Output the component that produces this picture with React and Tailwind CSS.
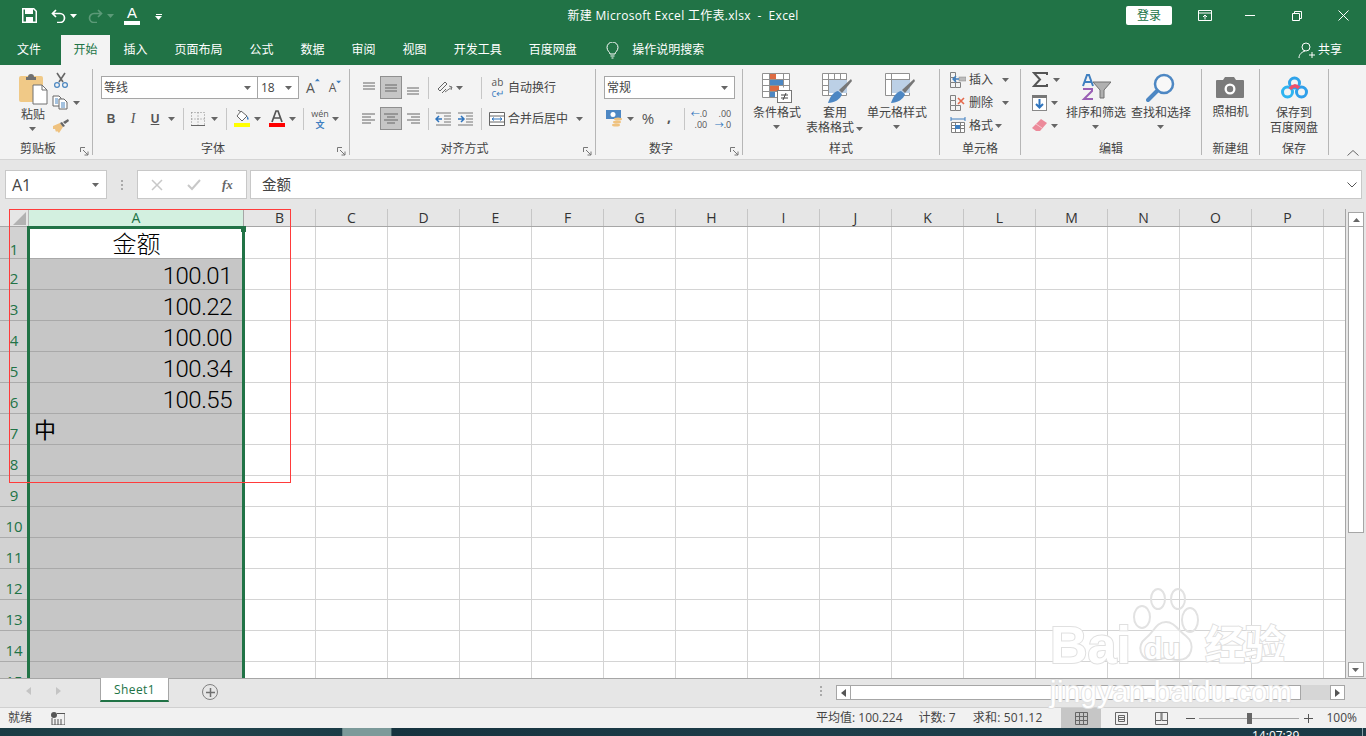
import React from "react";

const FONT = '"Open Sans","Noto Sans CJK SC",sans-serif';

const Caret = ({ c = "#666", className = "" }) => (
  <svg width="8" height="4" viewBox="0 0 8 4" className={className}><path d="M0 0h7L3.5 4z" fill={c} /></svg>
);
const Slot = ({ w, sel, children, className = "" }) => (
  <div style={{ width: w }} className={`h-[23px] shrink-0 flex items-center justify-center ${sel ? "bg-[#c6c6c6] border border-[#8f8f8f]" : ""} ${className}`}>{children}</div>
);
const VSep = ({ ml = 0, mr = 0 }) => <div style={{ marginLeft: ml, marginRight: mr }} className="w-px h-[22px] bg-[#c6c6c6] shrink-0" />;
const Launcher = () => (
  <svg width="9" height="9" viewBox="0 0 9 9" className="absolute right-[2px] bottom-[2px]"><path d="M.5 5V.5H5M3 3l5 5M8 4.5V8H4.5" fill="none" stroke="#777" strokeWidth="1" /></svg>
);
const Group = ({ w, label, launcher, children }) => (
  <>
    <div style={{ width: w }} className="h-[94px] shrink-0 flex flex-col relative">
      <div className="h-[76px]">{children}</div>
      <div className={`h-[16px] flex items-center justify-center leading-none text-[12px] text-[#444] whitespace-nowrap ${launcher ? "pr-[16px]" : ""}`}>{label}</div>
      {launcher && <div className="absolute right-[1px] bottom-[1px] w-[12px] h-[12px]"><Launcher /></div>}
    </div>
    <div className="w-px h-[86px] mt-[4px] bg-[#b6b6b6] shrink-0" />
  </>
);
const Big = ({ w, lines, caretInline, icon, iconClass = "" }) => (
  <div style={{ width: w }} className="shrink-0 flex flex-col items-center pt-[8px]">
    <div className={`h-[30px] flex items-center justify-center ${iconClass}`}>{icon}</div>
    <div className="mt-[2px] text-[12px] leading-[15px] text-[#444] text-center whitespace-nowrap">
      {lines.map((l, i) => <div key={l}>{l}{caretInline && i === lines.length - 1 && <Caret className="inline-block ml-[2px] align-middle" />}</div>)}
    </div>
    {lines.length === 1 && <Caret className="mt-[5px]" />}
  </div>
);
const Lines = ({ ys }) => (
  <svg width="16" height="14" viewBox="0 0 16 14">
    {ys.map(([x1, x2, y], i) => <path key={i} d={`M${x1} ${y}H${x2}`} stroke="#666" strokeWidth="1" />)}
  </svg>
);
const Tab = ({ children, active }) => (
  <div className={`h-[30px] flex items-center text-[12px] pb-[1px] whitespace-nowrap ${active ? "bg-[#f3f3f3] text-[#217346] px-[12.5px]" : "text-white px-[13.5px]"}`}>{children}</div>
);

const ClipIcon = () => (
  <svg width="30" height="32" viewBox="0 0 30 32">
    <rect x="1" y="3" width="24" height="26" rx="2" fill="#f0c987" />
    <path d="M8 4h2a3 3 0 0 1 6 0h2v3H8z" fill="#707070" />
    <path d="M15 12h9l5 5v14H15z" fill="#fff" stroke="#707070" /><path d="M24 12v5h5" fill="none" stroke="#707070" />
  </svg>
);
const CutIcon = () => (
  <svg width="16" height="16" viewBox="0 0 16 16"><path d="M4 1l6 9M12 1L6 10" stroke="#666" strokeWidth="1.6" /><circle cx="4" cy="13" r="2.4" fill="none" stroke="#4a86c0" strokeWidth="1.2" /><circle cx="12" cy="13" r="2.4" fill="none" stroke="#4a86c0" strokeWidth="1.2" /></svg>
);
const CopyIcon = () => (
  <svg width="16" height="15" viewBox="0 0 16 15"><path d="M1 1h6l2 2v8H1z" fill="#fff" stroke="#666" /><path d="M7 4h5l3 3v7H7z" fill="#fff" stroke="#666" /><path d="M3 4h3M3 6h3M3 8h3M9 8h4M9 10h4M9 12h4" stroke="#4a86c0" /></svg>
);
const PainterIcon = () => (
  <svg width="18" height="15" viewBox="0 0 18 15"><path d="M1 8l7-3 3 4-4 6-2-2-1 1-1-3-2 0z" fill="#efc27f" /><path d="M8 5l2-1 3 4-2 1zM11 4l5-3 1 2-4 3z" fill="#666" /></svg>
);
const CondIcon = () => (
  <svg width="30" height="30" viewBox="0 0 30 30">
    <path d="M.5.5h27v24H.5zM.5 6.5h27M.5 12.5h27M.5 18.5h20M7.5.5v24M21.5.5v14" fill="#fff" stroke="#909090" />
    <rect x="8" y="1" width="6" height="5" fill="#dd6b42" /><rect x="8" y="7" width="13" height="5" fill="#4d87c3" /><rect x="8" y="13" width="9" height="5" fill="#dd6b42" /><rect x="8" y="19" width="5" height="5" fill="#4d87c3" />
    <rect x="15.5" y="17.5" width="14" height="12" fill="#fff" stroke="#777" /><path d="M19 22h7M19 25h7M24 20l-3 7" stroke="#444" fill="none" />
  </svg>
);
const TableBrush = ({ single }) => (
  <svg width="30" height="30" viewBox="0 0 30 30">
    <path d="M.5.5h24v22H.5z" fill="#fff" stroke="#909090" />
    {single ? <path d="M.5 6.5h24M6.5.5v22" stroke="#909090" /> : <path d="M.5 6.5h24M.5 12.5h24M.5 17.5h24M6.5.5v22M12.5.5v22M18.5.5v22" stroke="#909090" />}
    <rect x="7" y="7" width="18" height="13" fill="#bcd0e6" />
    <path d="M29 6l1 2-10 12-3-3z" fill="#777" />
    <path d="M6 30c2-6 5-11 10-12l4 3c-1 5-8 9-14 9z" fill="#4d87c3" />
  </svg>
);
const InsIcon = ({ kind }) => (
  <svg width="16" height="16" viewBox="0 0 16 16">
    <path d="M.5.5h5v5h-5zM.5 5.5v5h5v-5M.5 10.5v5h5v-5M5.5 10.5h5v5h-5" fill="none" stroke="#808080" />
    {kind === "ins" ? <><rect x="9" y="5" width="7" height="4" fill="#bbb" stroke="#888" strokeWidth=".5" /><path d="M9 7H3M6 4L3 7l3 3" stroke="#3f7fc0" fill="none" strokeWidth="1.4" /></> : <path d="M8 3l6 6M14 3L8 9" stroke="#e4684a" strokeWidth="1.6" />}
  </svg>
);
const FmtIcon = () => (
  <svg width="16" height="17" viewBox="0 0 16 17"><path d="M1 2h14M1 0v4M15 0v4" stroke="#3f7fc0" /><path d="M1.500 5.500h13v10h-13zM1.500 8.500h13M1.500 11.500h13M5.500 5.500v10M10.500 5.500v10" fill="#fff" stroke="#808080" /><rect x="5" y="8" width="5" height="4" fill="#3f7fc0" /></svg>
);
const Sigma = () => <svg width="16" height="15" viewBox="0 0 16 15"><path d="M15 3V1H2l6 6.500L2 14h13v-2" fill="none" stroke="#555" strokeWidth="2" /></svg>;
const FillDown = () => <svg width="15" height="16" viewBox="0 0 15 16"><rect x=".5" y=".5" width="14" height="15" fill="#fff" stroke="#888" /><rect x="0" y="0" width="15" height="3" fill="#777" /><path d="M7.500 4v8M4 9l3.500 3.500L11 9" fill="none" stroke="#2f74bd" strokeWidth="2" /></svg>;
const Eraser = () => <svg width="15" height="13" viewBox="0 0 15 13"><path d="M9 0l6 4-7 8H4L0 9z" fill="#ec8a9a" /><path d="M4 5l6 4" stroke="#f7c6ce" /></svg>;
const SortIcon = () => (
  <svg width="30" height="28" viewBox="0 0 30 28">
    <path d="M2 12L6 1h2l4 11M4 8h6" fill="none" stroke="#3f7fc0" strokeWidth="2" />
    <path d="M2 15h9v2l-8 8h9" fill="none" stroke="#9a5fb5" strokeWidth="2" />
    <path d="M12 8h18l-7 8v8h-4v-8z" fill="#b0b0b0" stroke="#707070" />
  </svg>
);
const FindIcon = () => (
  <svg width="30" height="30" viewBox="0 0 30 30"><circle cx="18" cy="11" r="9" fill="#fff" fillOpacity=".4" stroke="#4d87c3" strokeWidth="2.5" /><path d="M11 18L2 27" stroke="#4d87c3" strokeWidth="4" strokeLinecap="round" /></svg>
);
const Camera = () => (
  <svg width="28" height="23" viewBox="0 0 28 23"><path d="M1 4h6l2-3h9l2 3h7a1 1 0 0 1 1 1v16a1 1 0 0 1-1 1H1a1 1 0 0 1-1-1V5a1 1 0 0 1 1-1z" fill="#7b7b7b" /><circle cx="14" cy="13" r="5.500" fill="#fff" /><circle cx="14" cy="13" r="3.200" fill="#7b7b7b" /></svg>
);
const BaiduLogo = () => (
  <svg width="27" height="24" viewBox="0 0 27 24" fill="none">
    <circle cx="13.500" cy="7" r="5" stroke="#2fa3ea" strokeWidth="3" />
    <circle cx="6.500" cy="16" r="5" stroke="#2fb4f0" strokeWidth="3" />
    <circle cx="20.500" cy="16" r="5" stroke="#2f9fea" strokeWidth="3" />
    <path d="M9 13c3-4 6-4 9-1" stroke="#ee4f6b" strokeWidth="3.500" />
  </svg>
);

const COLS = ["A", "B", "C", "D", "E", "F", "G", "H", "I", "J", "K", "L", "M", "N", "O", "P"];
const ROWS = [
  { n: 1, h: 32, t: "金额", kind: "c" },
  { n: 2, t: "100.01", kind: "r" },
  { n: 3, t: "100.22", kind: "r" },
  { n: 4, t: "100.00", kind: "r" },
  { n: 5, t: "100.34", kind: "r" },
  { n: 6, t: "100.55", kind: "r" },
  { n: 7, t: "中", kind: "l" },
  { n: 8 }, { n: 9 }, { n: 10 }, { n: 11 }, { n: 12 }, { n: 13 }, { n: 14 }, { n: 15 },
];
const CELLFONT = { fontFamily: '"Liberation Sans","Noto Sans CJK SC",sans-serif' };
const NUMFONT = { fontFamily: 'Roboto,"Liberation Sans",sans-serif' };

const Row = ({ r }) => (
  <div style={{ height: r.h || 31 }} className="flex shrink-0">
    <div className={`w-[29px] shrink-0 bg-[#d2d2d2] border-b border-[#ababab] border-r border-r-[#ababab] flex items-end justify-center text-[15px] text-[#217346] ${r.n === 1 ? "leading-[18px]" : "leading-[22px]"}`}>{r.n}</div>
    <div
      style={CELLFONT}
      className={`w-[215px] shrink-0 border-b border-[#a9a9a9] flex items-end text-[24px] leading-[26px] text-black pl-[1px] pr-[1px] ${r.n === 1 ? "bg-white justify-center" : "bg-[#c6c6c6]"} ${r.kind === "r" ? "justify-end" : ""}`}
    >
      {r.kind === "r" && <span style={NUMFONT} className="pr-[11px] font-light tracking-[-0.5px]">{r.t}</span>}
      {r.kind === "c" && <span className="font-light">{r.t}</span>}
      {r.kind === "l" && <span className="pl-[4px] text-[22px]">{r.t}</span>}
    </div>
    {COLS.slice(1).map((c) => <div key={c} className="w-[72px] shrink-0 border-b border-r border-[#d4d4d4] bg-white" />)}
    <div className="flex-1 border-b border-[#d4d4d4] bg-white" />
  </div>
);

export default function App() {
  return (
    <div style={{ fontFamily: FONT }} className="w-[1366px] h-[736px] overflow-hidden flex flex-col bg-[#e6e6e6] relative">
      {/* title bar */}
      <div className="h-[35px] shrink-0 bg-[#217346] flex items-center text-white pb-[4px]">
        <div className="w-[560px] shrink-0 flex items-center pl-[22px]">
          <svg width="15" height="15" viewBox="0 0 15 15"><path d="M.75.75h11l2.500 2.500v11H.75z" fill="none" stroke="#fff" strokeWidth="1.500" /><rect x="3" y="1" width="8" height="5" fill="#fff" /><rect x="4" y="9" width="7" height="5" fill="#fff" /></svg>
          <svg width="15" height="14" viewBox="0 0 15 14" className="ml-[14px]"><path d="M5 1L1.500 4.500 5 8M2 4.500h7a4.500 4.500 0 0 1 0 9H6" fill="none" stroke="#fff" strokeWidth="1.700" /></svg>
          <Caret c="#fff" className="ml-[4px]" />
          <svg width="15" height="14" viewBox="0 0 15 14" className="ml-[10px]"><path d="M10 1l3.500 3.500L10 8M13 4.500H6a4.500 4.500 0 0 0 0 9h3" fill="none" stroke="#5c9a78" strokeWidth="1.700" /></svg>
          <Caret c="#5c9a78" className="ml-[4px]" />
          <div className="ml-[9px] w-[16px] flex flex-col items-center">
            <span style={CELLFONT} className="text-[15px] leading-[14px]">A</span>
            <div className="w-[16px] h-[4px] bg-white mt-[1px]" />
          </div>
          <div className="ml-[15px] mt-[3px] flex flex-col items-center gap-[1px]"><div className="w-[6px] h-px bg-white" /><Caret c="#fff" /></div>
        </div>
        <div className="w-[246px] shrink-0 text-center text-[12px] tracking-[0.3px] whitespace-pre">新建 Microsoft Excel 工作表.xlsx  -  Excel</div>
        <div className="flex-1 flex items-center">
          <div className="ml-[320px] w-[46px] h-[19px] bg-white rounded-[2px] text-[12px] leading-[19px] text-center text-[#217346]">登录</div>
          <svg width="14" height="12" viewBox="0 0 14 12" className="ml-[26px]"><path d="M.5.500h13v10H.5zM.5 3h13M7 9.500V5M5 7l2-2 2 2" fill="none" stroke="#fff" /></svg>
          <div className="w-[10px] h-px bg-white ml-[33px]" />
          <svg width="10" height="10" viewBox="0 0 10 10" className="ml-[37px]"><path d="M.5 2.500h7v7h-7zM2.500 2.500v-2h7v7h-2" fill="none" stroke="#fff" /></svg>
          <svg width="11" height="11" viewBox="0 0 11 11" className="ml-[36px]"><path d="M.5.500l10 10M10.500.500l-10 10" stroke="#fff" /></svg>
        </div>
      </div>

      {/* tabs */}
      <div className="h-[30px] shrink-0 bg-[#217346] flex items-center pl-[3.5px]">
        <div className="mr-[6.500px]"><Tab>文件</Tab></div>
        <Tab active>开始</Tab>
        <Tab>插入</Tab><Tab>页面布局</Tab><Tab>公式</Tab><Tab>数据</Tab><Tab>审阅</Tab><Tab>视图</Tab><Tab>开发工具</Tab><Tab>百度网盘</Tab>
        <svg width="13" height="17" viewBox="0 0 13 17" className="ml-[16px]"><path d="M4 12c0-2-3-3-3-6.500a5.500 5.500 0 0 1 11 0C12 9 9 10 9 12zM4.500 14h4M5.500 16h2" fill="none" stroke="#fff" /></svg>
        <div className="ml-[13px] text-[12px] text-white whitespace-nowrap pb-[1px]">操作说明搜索</div>
        <div className="flex-1" />
        <svg width="17" height="17" viewBox="0 0 17 17" className="mr-[3px]"><circle cx="8" cy="5" r="4" fill="none" stroke="#fff" /><path d="M1 16c0-4 3-6 6-7M11 13h6M14 10v6" fill="none" stroke="#fff" /></svg>
        <div className="text-[12px] text-white pr-[24px] pb-[1px]">共享</div>
      </div>

      {/* ribbon */}
      <div style={{ color: "#444" }} className="h-[95px] shrink-0 bg-[#f3f3f3] border-b border-[#d4d4d4] flex text-[12px]">
        <Group w={92} label="剪贴板" launcher>
          <div className="flex">
            <div className="w-[52px] pl-[14px] pt-[8px] flex flex-col items-center">
              <ClipIcon />
              <div className="leading-[15px] mt-[2px] whitespace-nowrap">粘贴</div>
              <Caret className="mt-[5px]" />
            </div>
            <div className="pt-[3px] w-[32px]">
              <div className="h-[23px] flex items-center pl-[1px]"><CutIcon /></div>
              <div className="h-[23px] flex items-center gap-[5px]"><CopyIcon /><Caret /></div>
              <div className="h-[23px] flex items-center"><PainterIcon /></div>
            </div>
          </div>
        </Group>

        <Group w={256} label="字体" launcher>
          <div className="pt-[11px] pl-[8px]">
            <div className="flex h-[23px] items-center">
              <div className="w-[157px] h-[23px] bg-white border border-[#a6a6a6] flex items-center justify-between pl-[2px] pr-[5px]"><span>等线</span><Caret /></div>
              <div className="w-[41px] h-[23px] bg-white border border-[#a6a6a6] border-l-0 flex items-center justify-between pl-[3px] pr-[5px]"><span>18</span><Caret /></div>
              <div className="relative w-[21px] ml-[1px] text-center text-[14px] text-[#555]">A<Caret c="#3f7fc0" className="absolute top-[1px] right-[0px] rotate-180 scale-75" /></div>
              <div className="relative w-[21px] ml-[1px] text-center text-[12px] text-[#555]">A<Caret c="#3f7fc0" className="absolute top-[1px] right-[0px] scale-75" /></div>
            </div>
            <div className="flex items-center mt-[8px] -ml-[1px]">
              <Slot w={22}><b className="text-[#555]" style={CELLFONT}>B</b></Slot>
              <Slot w={22}><i className="text-[#555]" style={{ fontFamily: '"Liberation Serif",serif', fontSize: 14 }}>I</i></Slot>
              <Slot w={22}><span style={CELLFONT} className="underline font-bold text-[#555]">U</span></Slot>
              <Slot w={12}><Caret /></Slot>
              <VSep ml={5} mr={3} />
              <Slot w={22}>
                <svg width="14" height="14" viewBox="0 0 14 14"><path d="M.5.500h13v13H.5zM7 .5v13M.5 7h13" fill="none" stroke="#888" strokeDasharray="1 2" /><path d="M0 13.500h14" stroke="#666" /></svg>
              </Slot>
              <Slot w={12}><Caret /></Slot>
              <VSep ml={5} mr={4} />
              <Slot w={22}>
                <svg width="16" height="17" viewBox="0 0 16 17"><path d="M7 1l6 5-5 5-5-5z" fill="#fff" stroke="#666" /><path d="M4 0l3 2" stroke="#666" /><path d="M13 6c2 2 2 3 1 4l-1-1z" fill="#3f7fc0" /><rect x="0" y="13" width="16" height="4" fill="#ffff00" /></svg>
              </Slot>
              <Slot w={10}><Caret /></Slot>
              <div className="w-[3px]" />
              <Slot w={22}>
                <svg width="16" height="17" viewBox="0 0 16 17"><path d="M3 12L7 1h2l4 11M5 8h6" fill="none" stroke="#555" strokeWidth="1.700" /><rect y="13" width="16" height="4" fill="#ff0000" /></svg>
              </Slot>
              <Slot w={10}><Caret /></Slot>
              <VSep ml={5} mr={5} />
              <Slot w={22}>
                <div className="flex flex-col items-center leading-[11px] text-[9px]"><span className="text-[#555]">wén</span><span className="text-[#3f7fc0] font-bold">文</span></div>
              </Slot>
              <Slot w={10}><Caret /></Slot>
            </div>
          </div>
        </Group>

        <Group w={245} label="对齐方式" launcher>
          <div className="pt-[11px] pl-[8px]">
            <div className="flex items-center">
              <Slot w={22}><Lines ys={[[2, 14, 2], [2, 14, 5], [2, 14, 8]]} /></Slot>
              <Slot w={22} sel><Lines ys={[[2, 14, 4], [2, 14, 7], [2, 14, 10]]} /></Slot>
              <Slot w={22}><Lines ys={[[2, 14, 7], [2, 14, 10], [2, 14, 13]]} /></Slot>
              <VSep ml={4} mr={5} />
              <Slot w={22}>
                <svg width="18" height="16" viewBox="0 0 18 16"><path d="M2 9l7-7 2 2-7 7zM6 13l4-4" fill="none" stroke="#666" /><path d="M9 12l7-5M13 6l3 1-1 3" fill="none" stroke="#777" /></svg>
              </Slot>
              <Slot w={8}><Caret /></Slot>
              <VSep ml={17} mr={8} />
              <div className="w-[16px] flex justify-center leading-[11px] text-[10px] text-[#555]"><div className="flex flex-col"><span>ab</span><span className="text-[#3f7fc0]">c↵</span></div></div>
              <span className="ml-[2px] whitespace-nowrap">自动换行</span>
            </div>
            <div className="flex items-center mt-[8px]">
              <Slot w={22}><Lines ys={[[1, 14, 2], [1, 10, 5], [1, 14, 8], [1, 10, 11]]} /></Slot>
              <Slot w={22} sel><Lines ys={[[1, 15, 2], [4, 12, 5], [1, 15, 8], [4, 12, 11]]} /></Slot>
              <Slot w={22}><Lines ys={[[2, 15, 2], [6, 15, 5], [2, 15, 8], [6, 15, 11]]} /></Slot>
              <VSep ml={4} mr={3} />
              <Slot w={22}>
                <svg width="16" height="14" viewBox="0 0 16 14"><path d="M1 1h15M9 4h7M9 7h7M9 10h7M1 13h15" stroke="#777" /><path d="M7 7H1M4 4L1 7l3 3" fill="none" stroke="#2f74bd" strokeWidth="1.500" /></svg>
              </Slot>
              <div className="w-px" />
              <Slot w={22}>
                <svg width="16" height="14" viewBox="0 0 16 14"><path d="M0 1h15M8 4h7M8 7h7M8 10h7M0 13h15" stroke="#777" /><path d="M0 7h6M3 4l3 3-3 3" fill="none" stroke="#2f74bd" strokeWidth="1.500" /></svg>
              </Slot>
              <VSep ml={4} mr={7} />
              <svg width="16" height="14" viewBox="0 0 16 14"><path d="M.5.500h15v13H.5zM.5 4h15M.5 10h15" fill="#fff" stroke="#666" /><path d="M3 7h10M5 5.500L3 7l2 1.500M11 5.500L13 7l-2 1.500" fill="none" stroke="#2f74bd" /></svg>
              <span className="ml-[3px] whitespace-nowrap">合并后居中</span>
              <Caret className="ml-[8px]" />
            </div>
          </div>
        </Group>

        <Group w={146} label="数字" launcher>
          <div className="pt-[11px] pl-[8px]">
            <div className="w-[131px] h-[23px] bg-white border border-[#a6a6a6] flex items-center justify-between pl-[2px] pr-[5px]"><span>常规</span><Caret /></div>
            <div className="flex items-center mt-[8px]">
              <Slot w={21}>
                <svg width="17" height="17" viewBox="0 0 17 17"><rect x="0" y="0" width="15" height="9" fill="#4d87c3" /><circle cx="7" cy="4.500" r="2.500" fill="#fff" /><ellipse cx="12" cy="9" rx="4" ry="1.500" fill="#efc27f" /><ellipse cx="11" cy="12" rx="4" ry="1.500" fill="#efc27f" /><ellipse cx="10" cy="15" rx="4" ry="1.500" fill="#efc27f" /></svg>
              </Slot>
              <Slot w={12}><Caret /></Slot>
              <Slot w={22}><span className="text-[15px] text-[#555]">%</span></Slot>
              <Slot w={20}><span className="font-bold text-[14px] text-[#555] -mt-[4px]">,</span></Slot>
              <VSep ml={5} mr={4} />
              <Slot w={20}><div className="text-[9px] leading-[11px] text-[#555] text-right"><div><span className="text-[#2f74bd]">←</span>.0</div><div>.00</div></div></Slot>
              <div className="w-[4px]" />
              <Slot w={20}><div className="text-[9px] leading-[11px] text-[#555] text-right"><div>.00</div><div><span className="text-[#2f74bd]">→</span>.0</div></div></Slot>
            </div>
          </div>
        </Group>

        <Group w={196} label="样式">
          <div className="flex">
            <Big w={68} lines={["条件格式"]} icon={<CondIcon />} />
            <Big w={48} lines={["套用", "表格格式"]} caretInline icon={<TableBrush />} iconClass="pl-[3px]" />
            <Big w={76} lines={["单元格样式"]} icon={<TableBrush single />} iconClass="pl-[5px]" />
          </div>
        </Group>

        <Group w={80} label="单元格">
          <div className="pt-[3px] pl-[10px]">
            <div className="h-[23px] flex items-center"><InsIcon kind="ins" /><span className="ml-[3px]">插入</span><Caret className="ml-[9px]" /></div>
            <div className="h-[23px] flex items-center"><InsIcon kind="del" /><span className="ml-[3px]">删除</span><Caret className="ml-[9px]" /></div>
            <div className="h-[23px] flex items-center"><FmtIcon /><span className="ml-[3px]">格式</span><Caret className="ml-[2px]" /></div>
          </div>
        </Group>

        <Group w={180} label="编辑">
          <div className="flex">
            <div className="w-[43px] pt-[3px] pl-[11px]">
              <div className="h-[23px] flex items-center"><Sigma /><Caret className="ml-[5px]" /></div>
              <div className="h-[23px] flex items-center"><FillDown /><Caret className="ml-[4px]" /></div>
              <div className="h-[23px] flex items-center"><Eraser /><Caret className="ml-[4px]" /></div>
            </div>
            <Big w={64} lines={["排序和筛选"]} icon={<SortIcon />} />
            <Big w={66} lines={["查找和选择"]} icon={<FindIcon />} />
          </div>
        </Group>

        <Group w={57} label="新建组">
          <div className="flex justify-center pt-[11px]">
            <div className="flex flex-col items-center"><Camera /><div className="mt-[5px] leading-[15px] whitespace-nowrap">照相机</div></div>
          </div>
        </Group>

        <Group w={68} label="保存">
          <Big w={68} lines={["保存到", "百度网盘"]} icon={<BaiduLogo />} />
        </Group>

        <div className="flex-1 flex items-end justify-end pr-[7px] pb-[3px]">
          <svg width="12" height="6" viewBox="0 0 12 6"><path d="M.5 5.500L6 .5l5.500 5" fill="none" stroke="#666" /></svg>
        </div>
      </div>

      {/* formula bar */}
      <div className="h-[49px] shrink-0 flex items-start pt-[10px] bg-[#e6e6e6]">
        <div className="ml-[5px] w-[102px] h-[29px] bg-white border border-[#c8c8c8] flex items-center justify-between pl-[6px] pr-[6px] text-[16px] text-[#444]">A1<Caret /></div>
        <div className="w-[30px] h-[29px] flex flex-col items-center justify-center gap-[2px]">
          <div className="w-[2px] h-[2px] bg-[#aaa]" /><div className="w-[2px] h-[2px] bg-[#aaa]" /><div className="w-[2px] h-[2px] bg-[#aaa]" />
        </div>
        <div className="w-[110px] h-[29px] bg-white border border-[#c8c8c8] flex items-center">
          <svg width="12" height="12" viewBox="0 0 12 12" className="ml-[13px]"><path d="M1 1l10 10M11 1L1 11" stroke="#c8c8c8" strokeWidth="1.500" /></svg>
          <svg width="14" height="12" viewBox="0 0 14 12" className="ml-[24px]"><path d="M1 6l4 4 8-9" fill="none" stroke="#c8c8c8" strokeWidth="2" /></svg>
          <i className="ml-[21px] text-[13px] font-bold text-[#666]" style={{ fontFamily: '"Liberation Serif",serif' }}>fx</i>
        </div>
        <div className="ml-[3px] w-[1112px] h-[29px] bg-white border border-[#c8c8c8] flex items-center pl-[11px] pr-[4px] justify-between text-[14.500px] text-[#444]">
          <span>金额</span>
          <svg width="10" height="6" viewBox="0 0 10 6"><path d="M.5.5L5 5l4.500-4.500" fill="none" stroke="#555" /></svg>
        </div>
      </div>

      {/* sheet */}
      <div className="h-[470px] shrink-0 flex overflow-hidden border-b border-[#a6a6a6]">
        <div className="w-[1346px] shrink-0 relative overflow-hidden border-r border-[#a6a6a6]">
          <div className="h-[18px] flex border-b border-[#a6a6a6]">
            <div className="w-[29px] shrink-0 relative border-r border-[#b8b8b8]">
              <svg width="13" height="13" viewBox="0 0 13 13" className="absolute right-[2px] bottom-[1px]"><path d="M13 0v13H0z" fill="#b2b2b2" /></svg>
            </div>
            {COLS.map((c, i) => (
              <div key={c} className={`shrink-0 flex items-center justify-center pt-[1px] text-[14px] leading-none ${i === 0 ? "w-[215px] bg-[#d3f0e0] text-[#217346] border-r border-[#a6a6a6]" : "w-[72px] text-[#333] border-r border-[#c6c6c6]"}`}>{c}</div>
            ))}
            <div className="flex-1" />
          </div>
          {ROWS.map((r) => <Row key={r.n} r={r} />)}
          <div className="absolute left-[27px] top-[17px] w-[218px] h-[460px] border-x-[3px] border-t-[3px] border-[#217346]" />
          <div className="absolute left-[241px] top-[17px] w-[5px] h-[6px] bg-[#217346]" />
        </div>
        <div className="flex-1 flex flex-col items-center pt-[3px] bg-[#e6e6e6]">
          <div className="w-[16px] h-[15px] bg-white border border-[#a6a6a6] flex items-center justify-center"><Caret c="#666" className="rotate-180" /></div>
          <div className="w-[16px] h-[306px] bg-white border border-t-0 border-[#a6a6a6]" />
          <div className="flex-1" />
          <div className="w-[16px] h-[15px] bg-white border border-[#a6a6a6] flex items-center justify-center"><Caret c="#666" /></div>
          <div className="h-[1px]" />
        </div>
      </div>

      {/* sheet tabs */}
      <div className="h-[28px] shrink-0 flex items-start bg-[#e6e6e6]">
        <div className="w-[100px] h-[24px] flex items-center pl-[26px] gap-[23px]">
          <svg width="6" height="8" viewBox="0 0 6 8"><path d="M5 0v8L0 4z" fill="#c4c4c4" /></svg>
          <svg width="6" height="8" viewBox="0 0 6 8"><path d="M1 0v8l5-4z" fill="#c4c4c4" /></svg>
        </div>
        <div className="w-[69px] h-[24px] -mt-px pt-[2px] bg-white border-x border-[#a6a6a6] border-b-[2px] border-b-[#217346] flex items-center justify-center text-[12px] tracking-[0.4px] text-[#217346]">Sheet1</div>
        <div className="ml-[33px] w-[16px] h-[16px] mt-[5px] rounded-full border border-[#808080] flex items-center justify-center">
          <svg width="9" height="9" viewBox="0 0 9 9"><path d="M4.500 0v9M0 4.500h9" stroke="#707070" strokeWidth="1.500" /></svg>
        </div>
        <div className="ml-[593px] w-[20px] h-[24px] flex flex-col items-center justify-center gap-[2px]">
          <div className="w-[2px] h-[2px] bg-[#aaa]" /><div className="w-[2px] h-[2px] bg-[#aaa]" /><div className="w-[2px] h-[2px] bg-[#aaa]" />
        </div>
        <div className="ml-[5px] mt-[6px] w-[509px] h-[15px] flex bg-[#d6d6d6]">
          <div className="w-[15px] h-[15px] bg-white border border-[#a6a6a6] flex items-center justify-center"><svg width="5" height="8" viewBox="0 0 5 8"><path d="M5 0v8L0 4z" fill="#555" /></svg></div>
          <div className="w-[450px] h-[15px] bg-white border-y border-r border-[#a6a6a6]" />
          <div className="flex-1" />
          <div className="w-[15px] h-[15px] bg-white border border-[#a6a6a6] flex items-center justify-center"><svg width="5" height="8" viewBox="0 0 5 8"><path d="M0 0v8l5-4z" fill="#555" /></svg></div>
        </div>
      </div>

      {/* status bar */}
      <div className="h-[21px] shrink-0 bg-[#f1f1f1] border-t border-[#d0d0d0] flex items-center text-[12px] text-[#444]">
        <span className="ml-[8px] w-[24px] whitespace-nowrap">就绪</span>
        <svg width="14" height="13" viewBox="0 0 14 13" className="ml-[19px]"><circle cx="3" cy="3" r="3" fill="#555" /><path d="M6 1.500h8V13H1V6" fill="none" stroke="#555" /><path d="M3 8h9M3 10h9M3 12h9" stroke="#555" strokeDasharray="2 1" /></svg>
        <span className="ml-[751px] whitespace-nowrap">平均值: 100.224</span>
        <span className="ml-[16px] whitespace-nowrap">计数: 7</span>
        <span className="ml-[17px] whitespace-nowrap tracking-[0.2px]">求和: 501.12</span>
        <div className="ml-[19px] w-[40px] h-[20px] bg-[#c6c6c6] flex items-center justify-center">
          <svg width="13" height="13" viewBox="0 0 13 13"><path d="M.5.500h12v12H.5zM.5 4.500h12M.5 8.500h12M4.500.5v12M8.500.5v12" fill="none" stroke="#666" /></svg>
        </div>
        <div className="w-[40px] flex justify-center">
          <svg width="13" height="13" viewBox="0 0 13 13"><path d="M.5.500h12v12H.5zM3.500 3.500h6v6h-6zM3.500 5.500h6M3.500 7.500h6" fill="none" stroke="#666" /></svg>
        </div>
        <div className="w-[40px] flex justify-center">
          <svg width="13" height="13" viewBox="0 0 13 13"><path d="M.5.500h12v12H.5zM.5 8.500h5.500V.5M7 .5v8h5.500" fill="none" stroke="#666" /></svg>
        </div>
        <div className="ml-[5px] w-[9px] h-px bg-[#555]" />
        <div className="ml-[4px] w-[100px] h-px bg-[#a6a6a6] flex items-center justify-center"><div className="w-[5px] h-[11px] bg-[#666]" /></div>
        <svg width="9" height="9" viewBox="0 0 9 9" className="ml-[5px]"><path d="M4.500 0v9M0 4.500h9" stroke="#555" /></svg>
        <span className="ml-[13px] whitespace-nowrap">100%</span>
      </div>

      {/* taskbar */}
      <div className="flex-1 relative overflow-hidden bg-[linear-gradient(90deg,#1a3b44_0%,#24464d_12%,#1b3c47_25%,#7c9a9a_25.100%,#7c9a9a_28.600%,#16333f_28.700%,#1e3e4a_60%,#1a3a46_100%)]">
        <span className="absolute left-[1252px] top-[2px] text-[12px] leading-[12px] text-white">14:07:39</span>
        <div className="absolute left-[1362px] top-0 w-px h-full bg-[#8aa0a8]" />
      </div>

      {/* annotation */}
      <div className="absolute left-[9px] top-[209px] w-[282px] h-[274px] border border-[#ff3b3b]" />

      {/* watermark */}
      <div style={{ fontFamily: '"Liberation Sans",sans-serif' }} className="absolute left-[1050px] top-[590px] w-[250px] h-[118px] pointer-events-none">
        <div className="absolute left-0 top-[32px] text-[52px] leading-[46px] font-bold text-white [paint-order:stroke] [-webkit-text-stroke:2px_#e0e0e0]">Bai</div>
        <svg width="72" height="76" viewBox="0 0 72 76" className="absolute left-[78px] top-[-2px]" fill="none" stroke="#e2e2e2" strokeWidth="2">
          <ellipse cx="14" cy="29" rx="8" ry="11" /><ellipse cx="30" cy="11" rx="7" ry="10" /><ellipse cx="50" cy="11" rx="7" ry="10" /><ellipse cx="62" cy="32" rx="8" ry="12" />
          <path d="M38 34c8 0 12 8 20 14 10 8 6 24-8 24-5 0-8-2-12-2s-8 2-13 2C12 72 8 58 18 50c8-6 10-16 20-16z" fill="#ffffff" fillOpacity=".6" />
        </svg>
        <div className="absolute left-[94px] top-[42px] text-[30px] leading-[34px] font-bold text-white [paint-order:stroke] [-webkit-text-stroke:2px_#dcdcdc]">du</div>
        <div style={{ fontFamily: '"Noto Sans CJK SC",sans-serif' }} className="absolute left-[155px] top-[27px] text-[40px] leading-[50px] font-bold text-white [paint-order:stroke] [-webkit-text-stroke:2px_#e0e0e0] whitespace-nowrap">经验</div>
        <div className="absolute left-[0px] top-[86px] text-[29px] leading-[32px] tracking-[0.5px] text-white [paint-order:stroke] [-webkit-text-stroke:2px_#e2e2e2] whitespace-nowrap">jingyan.baidu.com</div>
      </div>
    </div>
  );
}
